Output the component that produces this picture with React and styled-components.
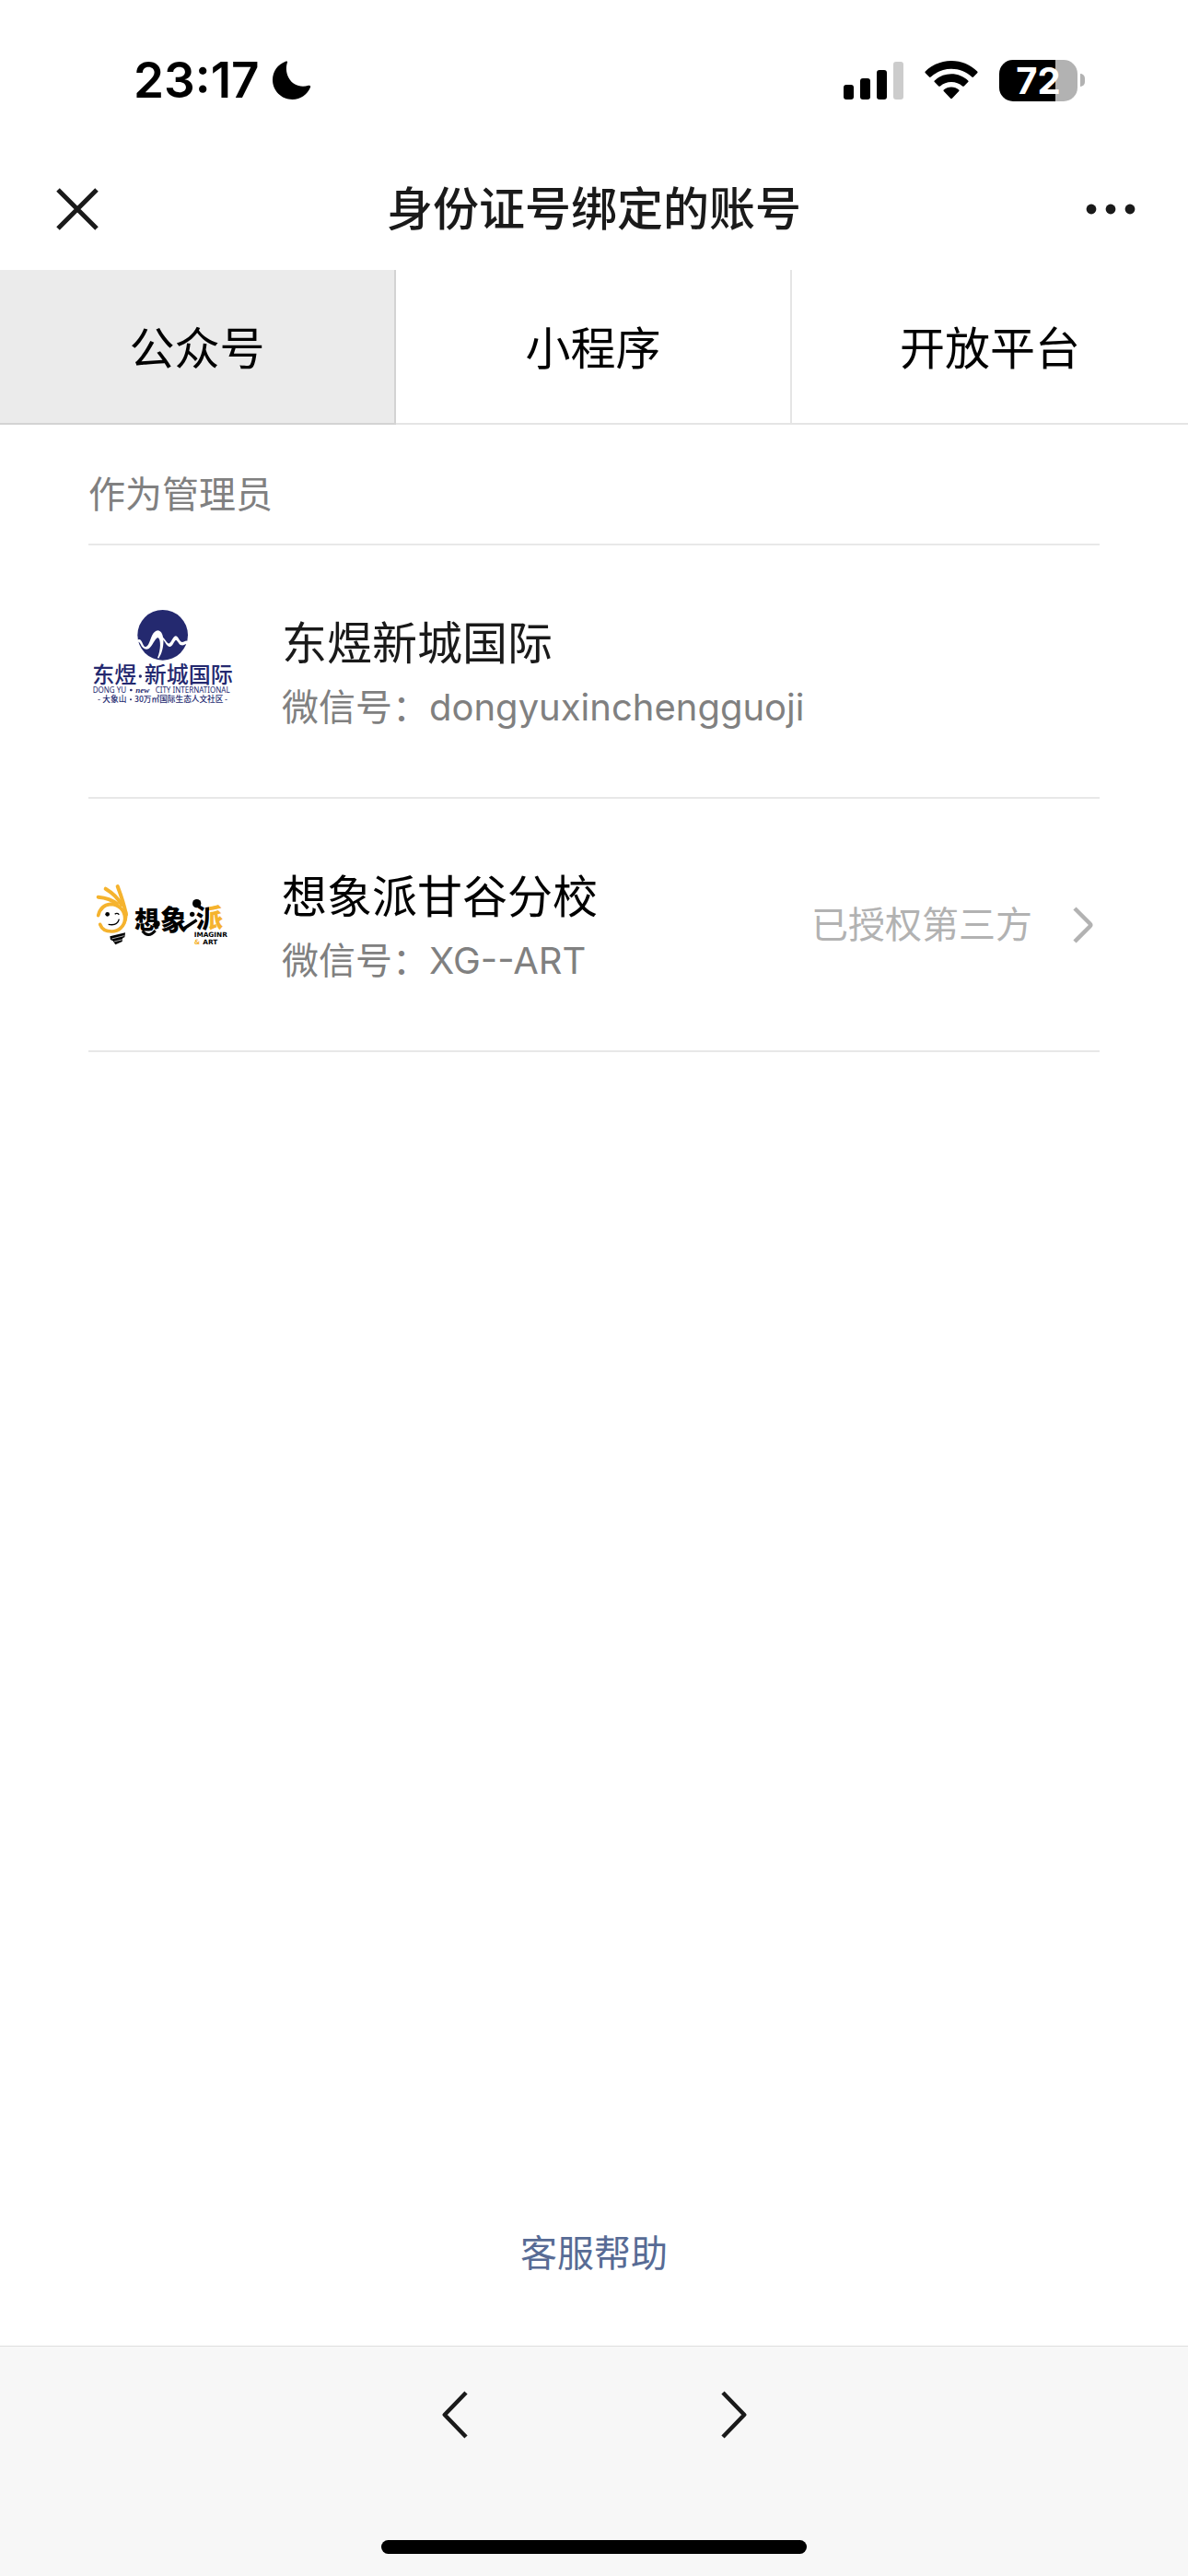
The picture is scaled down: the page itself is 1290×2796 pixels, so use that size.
import React, { useState } from 'react';
import styled, { createGlobalStyle } from 'styled-components';

const GlobalStyle = createGlobalStyle`
  * {
    box-sizing: border-box;
  }

  body {
    margin: 0;
    background: #fff;
    color: #000;
    font-family: Inter, 'Noto Sans CJK SC', sans-serif;
  }
`;

const StyledPage = styled.div`
  min-height: 100vh;
  display: flex;
  flex-direction: column;
`;

const StyledStatusBar = styled.div`
  height: 161px;
  padding: 13px 112px 0 145px;
  display: flex;
  align-items: center;
  justify-content: space-between;
`;

const StyledStatusGroup = styled.div`
  display: flex;
  align-items: center;
  gap: ${({ $gap }) => $gap}px;
`;

const StyledTime = styled.span`
  font-size: 53px;
  line-height: 60px;
  font-weight: 600;
`;

const StyledBattery = styled.div`
  display: flex;
  align-items: center;
  gap: 3px;
`;

const StyledBatteryBody = styled.div`
  width: 85px;
  height: 45px;
  border-radius: 15px;
  background: linear-gradient(to right, #000 61px, #b2b2b2 61px);
  color: #fff;
  font-size: 40px;
  line-height: 46px;
  font-weight: 700;
  text-align: center;
`;

const StyledBatteryTip = styled.div`
  width: 5px;
  height: 14px;
  border-radius: 0 7px 7px 0;
  background: #b2b2b2;
`;

const StyledHeader = styled.header`
  height: 132px;
  padding: 0 50px;
  display: grid;
  grid-template-columns: 80px 1fr 80px;
  align-items: center;
`;

const StyledTitle = styled.h1`
  margin: 0;
  color: #1a1a1a;
  font-size: 50px;
  line-height: 70px;
  font-weight: 500;
  text-align: center;
`;

const StyledIconButton = styled.button`
  height: 80px;
  padding: 0 10px;
  border: 0;
  background: none;
  color: #1a1a1a;
  display: flex;
  align-items: center;
  justify-content: center;
`;

const StyledCloseButton = styled(StyledIconButton)`
  justify-content: flex-start;
`;

const StyledMoreButton = styled(StyledIconButton)`
  padding-right: 6px;
  justify-content: flex-end;
`;

const StyledTabs = styled.div`
  display: grid;
  grid-template-columns: repeat(3, 1fr);
`;

const StyledTab = styled.button`
  height: 168px;
  padding: 6px 0 0;
  border: solid rgba(0, 0, 0, 0.1);
  border-width: 0 2px 2px 0;
  background: ${({ $active }) => ($active ? '#ebebeb' : '#fff')};
  color: #000;
  font: inherit;
  font-size: 49px;
  line-height: 70px;

  &:last-child {
    border-right-width: 0;
  }
`;

const StyledMain = styled.main`
  flex: 1;
  padding: 0 96px;
  display: flex;
  flex-direction: column;
`;

const StyledSectionHeading = styled.h2`
  margin: 0;
  padding: 46px 0 24px;
  border-bottom: 2px solid #e8e8e8;
  color: #808080;
  font-size: 40px;
  line-height: 59px;
  font-weight: 400;
`;

const StyledList = styled.ul`
  margin: 0;
  padding: 0;
  list-style: none;
`;

const StyledAccount = styled.li`
  height: 275px;
  border-bottom: 2px solid #e8e8e8;
  display: flex;
  align-items: center;
`;

const StyledAccountInfo = styled.div`
  flex: 1;
  margin-left: 50px;
  padding-top: 8px;
`;

const StyledName = styled.p`
  margin: 0;
  color: ${({ $muted }) => ($muted ? '#1a1a1a' : '#000')};
  font-size: 49px;
  line-height: 70px;
`;

const StyledAccountId = styled.p`
  margin: 0;
  color: #808080;
  font-size: 40px;
  line-height: 68px;
`;

const StyledStatusLink = styled.a`
  padding-right: 7px;
  display: flex;
  align-items: center;
  gap: 44px;
  color: #b2b2b2;
  font-size: 40px;
  line-height: 60px;
  text-decoration: none;
`;

const StyledHelp = styled.a`
  margin: auto auto 0;
  padding-bottom: 70px;
  color: #576b95;
  font-size: 40px;
  line-height: 60px;
  text-decoration: none;
`;

const StyledFooter = styled.footer`
  height: 250px;
  padding: 34px 0 24px;
  border-top: 1px solid #dedede;
  background: #f7f7f7;
  display: flex;
  flex-direction: column;
  align-items: center;
  justify-content: space-between;
`;

const StyledHistory = styled.nav`
  display: flex;
  gap: 255px;
`;

const StyledHomeIndicator = styled.div`
  width: 462px;
  height: 15px;
  border-radius: 8px;
  background: #000;
`;

const MoonIcon = () => (
  <svg width="42" height="42" viewBox="0 0 42 42" aria-hidden="true">
    <path d="M14 .7C15 .2 16.400 .4 16.100 1.600C14.400 6 14.300 13 17.500 18.500C21.500 26 30 29.500 39 26.800C40.600 26.300 41.600 27.200 41 28.800C38 36.500 30.500 42 21.500 42C9.500 42 0 32.500 0 20.800C0 11.500 5.500 4 14 .7Z" />
  </svg>
);

const SignalIcon = () => (
  <svg width="65" height="41" viewBox="0 0 65 41" aria-hidden="true">
    <rect y="25" width="11" height="16" rx="3" />
    <rect x="18" y="18" width="11" height="23" rx="3" />
    <rect x="36" y="9" width="11" height="32" rx="3" />
    <rect x="54" width="11" height="41" rx="3" fill="#ccc" />
  </svg>
);

const WifiIcon = () => (
  <svg width="58" height="42" viewBox="0 0 58 42" aria-hidden="true">
    <path d="M29 0C40 0 50 4.400 57.200 11.500Q58 12.300 57.200 13.200L53 17.500Q52.200 18.300 51.300 17.500C45.300 12 37.500 8.700 29 8.700S12.700 12 6.700 17.500Q5.800 18.300 5 17.500L.8 13.200Q0 12.300.8 11.500C8 4.400 18 0 29 0Z" />
    <path d="M29 14.300C36 14.300 42.400 17 47.200 21.400Q48 22.200 47.200 23L42.800 27.400Q42 28.200 41 27.400C37.800 24.600 33.600 23 29 23S20.200 24.600 17 27.400Q16 28.200 15.200 27.400L10.800 23Q10 22.200 10.800 21.400C15.600 17 22 14.300 29 14.300Z" />
    <path d="M29 28.500C32.200 28.500 35 29.600 37.200 31.400Q38.100 32.200 37.200 33.100L29.900 40.800Q29 41.700 28.100 40.800L20.800 33.100Q19.900 32.200 20.800 31.400C23 29.600 25.800 28.500 29 28.500Z" />
  </svg>
);

const CloseIcon = () => (
  <svg width="48" height="48" viewBox="0 0 48 48" fill="none" aria-hidden="true">
    <path d="M3 3L45 45M45 3L3 45" stroke="currentColor" strokeWidth="5" />
  </svg>
);

const MoreIcon = () => (
  <svg width="56" height="12" viewBox="0 0 56 12" fill="currentColor" aria-hidden="true">
    <circle cx="7" cy="6" r="5.400" />
    <circle cx="28" cy="6" r="5.400" />
    <circle cx="49" cy="6" r="5.400" />
  </svg>
);

const RowChevron = () => (
  <svg width="22" height="40" viewBox="0 0 22 40" fill="none" aria-hidden="true">
    <path
      d="M2 2L18.500 18.500Q20 20 18.500 21.500L2 38"
      stroke="currentColor"
      strokeWidth="4.500"
    />
  </svg>
);

const HistoryChevron = ({ back }) => (
  <svg width="28" height="52" viewBox="0 0 28 52" fill="none" aria-hidden="true">
    <path
      d={back ? 'M26 2L2.800 26L26 50' : 'M2 2L25.200 26L2 50'}
      stroke="currentColor"
      strokeWidth="4.500"
      strokeLinejoin="round"
    />
  </svg>
);

const CityLogo = () => (
  <svg width="160" height="160" viewBox="18 27 480 480" fill="#24296f" role="img" aria-label="东煜新城国际">
    <circle cx="260" cy="148" r="82" />
    <path
      d="M176 166C184 157 190 164 195 176C201 191 208 188 214 177C223 160 226 134 245 133C268 136 268 194 247 224L243 222C254 198 255 160 244 156C234 160 226 184 215 192C203 198 193 190 188 178C185 170 181 168 177 172Z"
      fill="#fff"
    />
    <path
      d="M257 152C268 158 273 177 282 175C290 169 294 151 303 151C312 153 314 170 323 171C331 170 335 163 343 168L342 178C334 175 329 183 321 181C311 178 309 165 303 164C297 167 293 184 284 186C271 186 268 166 257 160Z"
      fill="#fff"
    />
    <g fontFamily="'Noto Sans CJK SC', sans-serif">
      <text x="31" y="303" fontSize="72" fontWeight="500">东煜</text>
      <circle cx="187" cy="282" r="5" />
      <text x="200" y="303" fontSize="72" fontWeight="500">新城国际</text>
      <text x="48" y="367" fontSize="25" fontWeight="500">-</text>
      <text x="64" y="367" fontSize="26" fontWeight="500">大象山</text>
      <circle cx="156" cy="358" r="3" />
      <text x="168" y="367" fontSize="26" fontWeight="500">30万㎡国际生态人文社区</text>
      <text x="462" y="367" fontSize="25" fontWeight="500">-</text>
    </g>
    <g fontFamily="'Noto Sans', sans-serif" fontSize="24">
      <text x="32" y="336">DONG YU</text>
      <circle cx="157" cy="327" r="4" />
      <text x="172" y="336" fontFamily="'Liberation Serif', serif" fontSize="27" fontStyle="italic" fontWeight="700">
        new
      </text>
      <text x="236" y="336">CITY INTERNATIONAL</text>
    </g>
  </svg>
);

const ImagineLogo = () => (
  <svg width="160" height="160" viewBox="18 -48 480 480" role="img" aria-label="想象派">
    <defs>
      <linearGradient id="brush" gradientUnits="userSpaceOnUse" x1="340" y1="0" x2="460" y2="0">
        <stop offset="0.6" stopColor="#000" />
        <stop offset="0.6" stopColor="#f5b32e" />
      </linearGradient>
    </defs>
    <g fill="none" stroke="#f5b32e" strokeLinecap="round">
      <path d="M50 161C55 139 70 126 90 124C116 124 137 144 137 171C136 196 117 213 94 213C75 213 61 204 56 190" strokeWidth="11" />
      <path d="M50 101C74 103 94 109 111 123" strokeWidth="12" />
      <path d="M74 74C98 88 115 105 126 126" strokeWidth="12" />
      <path d="M113 66C124 95 134 124 141 158" strokeWidth="12" />
      <path d="M141 150C143 171 139 185 130 195" strokeWidth="8" />
    </g>
    <circle cx="80" cy="157" r="7" />
    <path d="M104 157Q111 151 118 158" fill="none" stroke="#000" strokeWidth="4" />
    <path d="M83 190Q112 196 118 173" fill="none" stroke="#000" strokeWidth="4" />
    <path d="M88 229L138 217L136 232L130 234L128 246L106 256L98 244L90 240Z" />
    <path d="M94 237L134 227M102 246L130 239" stroke="#fff" strokeWidth="2" />
    <g fontFamily="'Noto Sans CJK SC', sans-serif" fontWeight="900">
      <text x="168" y="203" fontSize="80">想</text>
      <text x="252" y="207" fontSize="88">象</text>
      <text x="368" y="200" fontSize="88" fill="url(#brush)">派</text>
    </g>
    <path d="M194 211Q213 237 236 210" fill="none" stroke="#000" strokeWidth="9" />
    <circle cx="241" cy="188" r="10" />
    <circle cx="371" cy="122" r="14" />
    <circle cx="356" cy="157" r="8" />
    <path d="M324 207L371 176" stroke="#000" strokeWidth="10" />
    <g fontFamily="'DejaVu Sans', sans-serif" fontSize="22" fontWeight="700">
      <text x="362" y="231">IMAGINR</text>
      <text x="362" y="255" fill="#f5b32e">&amp;</text>
      <text x="391" y="255">ART</text>
    </g>
  </svg>
);

const tabs = ['公众号', '小程序', '开放平台'];

const accounts = [
  { name: '东煜新城国际', id: 'dongyuxinchengguoji', Logo: CityLogo, muted: true },
  { name: '想象派甘谷分校', id: 'XG--ART', Logo: ImagineLogo, status: '已授权第三方' }
];

const StatusBar = () => (
  <StyledStatusBar>
    <StyledStatusGroup $gap={14}>
      <StyledTime>23:17</StyledTime>
      <MoonIcon />
    </StyledStatusGroup>
    <StyledStatusGroup $gap={23}>
      <SignalIcon />
      <WifiIcon />
      <StyledBattery>
        <StyledBatteryBody>72</StyledBatteryBody>
        <StyledBatteryTip />
      </StyledBattery>
    </StyledStatusGroup>
  </StyledStatusBar>
);

const Account = ({ name, id, Logo, status, muted }) => (
  <StyledAccount>
    <Logo />
    <StyledAccountInfo>
      <StyledName $muted={muted}>{name}</StyledName>
      <StyledAccountId>微信号：{id}</StyledAccountId>
    </StyledAccountInfo>
    {status && (
      <StyledStatusLink href="#authorization">
        {status}
        <RowChevron />
      </StyledStatusLink>
    )}
  </StyledAccount>
);

const App = () => {
  const [activeTab, setActiveTab] = useState(0);

  return (
    <StyledPage>
      <GlobalStyle />
      <StatusBar />
      <StyledHeader>
        <StyledCloseButton aria-label="关闭">
          <CloseIcon />
        </StyledCloseButton>
        <StyledTitle>身份证号绑定的账号</StyledTitle>
        <StyledMoreButton aria-label="更多">
          <MoreIcon />
        </StyledMoreButton>
      </StyledHeader>
      <StyledTabs role="tablist">
        {tabs.map((tab, index) => (
          <StyledTab
            key={tab}
            role="tab"
            aria-selected={index === activeTab}
            $active={index === activeTab}
            onClick={() => setActiveTab(index)}
          >
            {tab}
          </StyledTab>
        ))}
      </StyledTabs>
      <StyledMain>
        <StyledSectionHeading>作为管理员</StyledSectionHeading>
        <StyledList>
          {accounts.map(account => (
            <Account key={account.id} {...account} />
          ))}
        </StyledList>
        <StyledHelp href="#help">客服帮助</StyledHelp>
      </StyledMain>
      <StyledFooter>
        <StyledHistory>
          <StyledIconButton aria-label="后退">
            <HistoryChevron back />
          </StyledIconButton>
          <StyledIconButton aria-label="前进">
            <HistoryChevron />
          </StyledIconButton>
        </StyledHistory>
        <StyledHomeIndicator />
      </StyledFooter>
    </StyledPage>
  );
};

export default App;
